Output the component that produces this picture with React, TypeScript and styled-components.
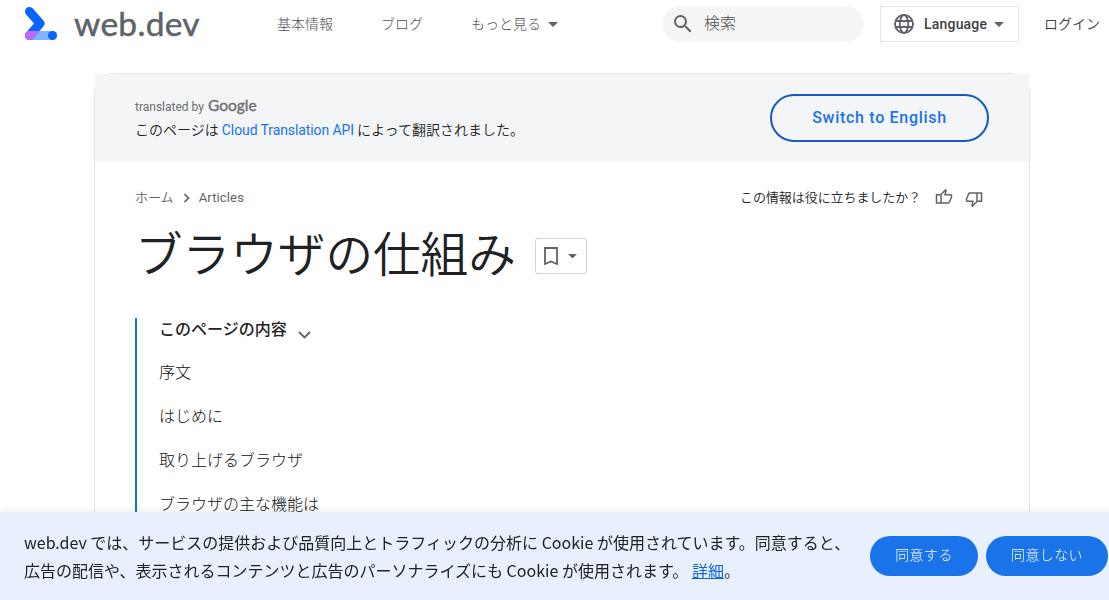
import React from "react";
import styled, { createGlobalStyle } from "styled-components";

const jp = '"Noto Sans CJK JP", sans-serif';

const GlobalStyle = createGlobalStyle`
  * { box-sizing: border-box; }
  html, body { margin: 0; height: 600px; overflow: hidden; background: #fff; }
  body { font-family: ${jp}; color: #202124; font-size: 14px; }
  svg { display: block; flex: none; }
`;

const Page = styled.div`
  height: 600px;
  overflow: hidden;
  display: flex;
  flex-direction: column;
`;

const Header = styled.header`
  flex: none;
  display: flex;
  align-items: center;
  height: 48px;
  padding-left: 24px;
`;

const Brand = styled.a`
  display: flex;
  align-items: center;
  width: 253px;
  gap: 16px;
`;

const Wordmark = styled.span`
  padding-bottom: 2px;
  font: 400 33.5px/40px Lato, sans-serif;
  letter-spacing: 0.3px;
  color: #5f6368;
  -webkit-text-stroke: 0.5px #5f6368;
`;

const Nav = styled.nav`
  display: flex;
  gap: 48px;
  width: 386px;
  padding-bottom: 2px;
`;

const NavItem = styled.a`
  display: flex;
  align-items: center;
  gap: 7px;
  font-weight: 300;
  line-height: 20px;
  color: #4c5054;
  white-space: nowrap;
  svg { margin-top: 2px; }
`;

const Search = styled.label`
  display: flex;
  align-items: center;
  gap: 9px;
  width: 201px;
  height: 36px;
  padding-left: 8px;
  border-radius: 18px;
  background: #f4f5f7;
  color: #4c5054;
  font-size: 16px;
  font-weight: 300;
  span { padding-bottom: 4px; }
`;

const LanguageButton = styled.button`
  display: flex;
  align-items: center;
  width: 139px;
  height: 36px;
  margin: 0 25px 0 16px;
  padding: 0 0 0 11px;
  border: 1px solid #e4e6e9;
  background: #fff;
  color: #3c4043;
  font: 500 14px/20px Roboto, sans-serif;
  letter-spacing: 0.2px;
  span { margin: 0 7px 0 8px; }
`;

const Login = styled.a`
  padding-bottom: 3px;
  font-weight: 350;
  color: #3c4043;
  line-height: 20px;
  white-space: nowrap;
`;

const Article = styled.main`
  flex: none;
  width: 936px;
  height: 620px;
  margin: 25px 0 0 94px;
  border: 1px solid #e2e5e9;
  border-radius: 20px;
`;

const Banner = styled.section`
  display: flex;
  align-items: center;
  justify-content: space-between;
  height: 88px;
  padding: 0 40px;
  background: #f3f5f7;
`;

const Attribution = styled.div`
  display: flex;
  align-items: baseline;
  gap: 4px;
  height: 20px;
  font: 400 12px/20px Roboto, sans-serif;
  letter-spacing: 0px;
  color: #6c7074;
`;

const GoogleMark = styled.span`
  font: 400 15.5px/20px Lato, sans-serif;
  letter-spacing: 0;
  color: #6c7074;
  -webkit-text-stroke: 0.4px #6c7074;
`;

const BannerText = styled.p`
  margin: 2px 0 0;
  line-height: 24px;
  white-space: nowrap;
  font-weight: 350;
`;

const BannerLink = styled.a`
  color: #1a73e8;
  font: 400 14px/24px Roboto, sans-serif;
  letter-spacing: -0.1px;
`;

const SwitchButton = styled.button`
  width: 219px;
  height: 48px;
  border: 2px solid #185abc;
  border-radius: 24px;
  background: transparent;
  color: #1a73e8;
  font: 500 16px/24px Roboto, sans-serif;
  letter-spacing: 0.7px;
`;

const Meta = styled.div`
  display: flex;
  align-items: center;
  justify-content: space-between;
  height: 20px;
  margin: 25px 46px 0 40px;
`;

const Crumbs = styled.div`
  display: flex;
  align-items: center;
  color: #5f6368;
  font-weight: 350;
  font-size: 13px;
  line-height: 20px;
  svg { margin: 1px 8px 0 8px; }
`;

const LatinCrumb = styled.span`
  padding-top: 2px;
  font: 400 13px/20px Roboto, sans-serif;
  letter-spacing: 0.15px;
`;

const Feedback = styled.div`
  display: flex;
  align-items: center;
  font-size: 13px;
  line-height: 20px;
  font-weight: 350;
  letter-spacing: -0.08px;
  svg { margin-left: 12px; }
  svg:first-of-type { margin-left: 14px; }
  svg:last-of-type { margin-top: 3px; }
`;

const TitleRow = styled.div`
  display: flex;
  align-items: center;
  height: 64px;
  margin: 13px 0 0 40px;
`;

const Title = styled.h1`
  margin: 0;
  padding-bottom: 1px;
  width: 400px;
  font-size: 47.6px;
  line-height: 62px;
  font-weight: 350;
  white-space: nowrap;
`;

const SaveButton = styled.button`
  display: flex;
  align-items: center;
  gap: 9px;
  width: 52px;
  height: 36px;
  margin-top: 8px;
  padding: 0 0 0 7px;
  border: 1px solid #d0d3d7;
  border-radius: 3px;
  background: #fff;
`;

const Contents = styled.nav`
  height: 300px;
  margin: 34px 0 0 40px;
  padding-left: 22px;
  border-left: 2px solid #1a73c8;
`;

const ContentsTitle = styled.div`
  display: flex;
  align-items: center;
  gap: 11px;
  height: 22px;
  margin-bottom: 19px;
  font-size: 16px;
  line-height: 22px;
  font-weight: 500;
  span { padding-bottom: 3px; }
  svg { margin-top: 12px; }
`;

const ContentsLink = styled.a`
  display: block;
  height: 24px;
  margin-bottom: 20px;
  font-size: 16px;
  line-height: 24px;
  font-weight: 300;
  color: #101214;
`;

const CookieBar = styled.aside`
  position: fixed;
  left: 0;
  right: 0;
  bottom: 0;
  height: 88px;
  display: flex;
  align-items: center;
  padding-left: 24px;
  background: #e8f0fe;
  box-shadow: 0 -1px 6px rgba(60, 64, 67, 0.1);
`;

const CookieText = styled.p`
  flex: none;
  margin: 0;
  width: 846px;
  font-size: 16px;
  line-height: 28px;
  font-weight: 400;
  white-space: nowrap;
  a { color: #0b66dc; text-decoration: underline; }
`;

const ConsentButton = styled.button<{ $width: number }>`
  flex: none;
  width: ${(p) => p.$width}px;
  height: 40px;
  margin-right: 8px;
  padding: 0 0 4px;
  border: 0;
  border-radius: 20px;
  background: #1a73e8;
  color: #fff;
  font: 300 14px/20px ${jp};
  letter-spacing: 0.4px;
`;

const Caret = ({ size = 10 }: { size?: number }) => (
  <svg width={size} height={size / 2} viewBox="0 0 10 5" fill="#5f6368">
    <path d="M0 0h10L5 5z" />
  </svg>
);

const Logo = () => (
  <svg width="34" height="34" viewBox="0 0 34 34">
    <defs>
      <clipPath id="foot">
        <path d="M0 24h34v10H0z" />
      </clipPath>
    </defs>
    <path d="M5.5 28.500H28.500" stroke="#7fb2ff" strokeWidth="9" strokeLinecap="round" />
    <path d="M5.500 4.500L16 16.500L5.500 28.500" fill="none" stroke="#0766ff" strokeWidth="9" strokeLinecap="round" strokeLinejoin="round" />
    <path clipPath="url(#foot)" d="M16 16.500L5.500 28.500" stroke="#c068f8" strokeWidth="9" strokeLinecap="round" />
    <circle cx="28.500" cy="28.500" r="4.500" fill="#0766ff" />
  </svg>
);

const Thumb = ({ down = false }: { down?: boolean }) => (
  <svg width="18" height="18" viewBox="0 0 24 24" fill="#5f6368">
    <g transform={down ? "translate(24 24) rotate(180)" : undefined}>
      <path d="M21 8h-6.300l1-4.600v-.3c0-.4-.2-.8-.5-1.100L14.200 1 7.600 7.600C7.400 7.800 7.200 8 7.100 8H1v13h17c.8 0 1.500-.5 1.800-1.200l3-7.100c.1-.2.2-.5.2-.7v-2c0-1.100-.9-2-2-2zM7 19H3v-9h4v9zm14-7-3 7H9V9l4.300-4.300L12.200 10H21v2z" />
    </g>
  </svg>
);

const sections = ["序文", "はじめに", "取り上げるブラウザ", "ブラウザの主な機能は"];

export default function App() {
  return (
    <Page>
      <GlobalStyle />
      <Header>
        <Brand>
          <Logo />
          <Wordmark>web.dev</Wordmark>
        </Brand>
        <Nav>
          <NavItem>基本情報</NavItem>
          <NavItem>ブログ</NavItem>
          <NavItem>もっと見る <Caret /></NavItem>
        </Nav>
        <Search>
          <svg width="24" height="24" viewBox="0 0 24 24" fill="#5f6368">
            <path d="M15.500 14h-.79l-.28-.27A6.470 6.470 0 0 0 16 9.500 6.500 6.500 0 1 0 9.500 16c1.610 0 3.090-.59 4.230-1.570l.27.28v.79l5 4.990L20.490 19l-4.990-5zm-6 0a4.500 4.500 0 1 1 0-9 4.500 4.500 0 0 1 0 9z" />
          </svg>
          <span>検索</span>
        </Search>
        <LanguageButton>
          <svg width="24" height="24" viewBox="0 0 24 24" fill="none" stroke="#5f6368" strokeWidth="1.900">
            <circle cx="12" cy="12" r="9" />
            <ellipse cx="12" cy="12" rx="4.200" ry="9" />
            <path d="M3.700 9h16.600M3.700 15h16.600" />
          </svg>
          <span>Language</span>
          <Caret />
        </LanguageButton>
        <Login>ログイン</Login>
      </Header>
      <Article>
        <Banner>
          <div>
            <Attribution>translated by <GoogleMark>Google</GoogleMark></Attribution>
            <BannerText>
              このページは <BannerLink>Cloud Translation API</BannerLink> によって翻訳されました。
            </BannerText>
          </div>
          <SwitchButton>Switch to English</SwitchButton>
        </Banner>
        <Meta>
          <Crumbs>
            ホーム
            <svg width="9" height="10" viewBox="0 0 9 10" fill="none" stroke="#5f6368" strokeWidth="1.700">
              <path d="M2.500 1l4 4-4 4" />
            </svg>
            <LatinCrumb>Articles</LatinCrumb>
          </Crumbs>
          <Feedback>
            この情報は役に立ちましたか？
            <Thumb />
            <Thumb down />
          </Feedback>
        </Meta>
        <TitleRow>
          <Title>ブラウザの仕組み</Title>
          <SaveButton>
            <svg width="16" height="20" viewBox="0 0 16 20" fill="none" stroke="#5f6368" strokeWidth="1.800">
              <path d="M2 2h12v16l-6-2.600L2 18z" />
            </svg>
            <Caret size={9} />
          </SaveButton>
        </TitleRow>
        <Contents>
          <ContentsTitle>
            <span>このページの内容</span>
            <svg width="13" height="8" viewBox="0 0 13 8" fill="none" stroke="#5f6368" strokeWidth="1.800">
              <path d="M1 1l5.500 5.500L12 1" />
            </svg>
          </ContentsTitle>
          {sections.map((s) => (
            <ContentsLink key={s}>{s}</ContentsLink>
          ))}
        </Contents>
      </Article>
      <CookieBar>
        <CookieText>
          web.dev では、サービスの提供および品質向上とトラフィックの分析に Cookie が使用されています。同意すると、
          <br />
          広告の配信や、表示されるコンテンツと広告のパーソナライズにも Cookie が使用されます。 <a>詳細</a>。
        </CookieText>
        <ConsentButton $width={108}>同意する</ConsentButton>
        <ConsentButton $width={122}>同意しない</ConsentButton>
      </CookieBar>
    </Page>
  );
}
